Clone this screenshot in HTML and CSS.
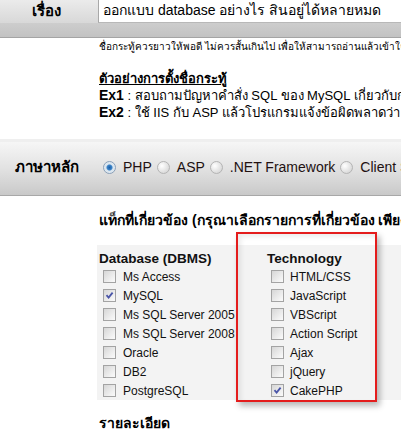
FILE: index.html
```html
<!DOCTYPE html>
<html>
<head>
<meta charset="utf-8">
<link rel="stylesheet" href="styles.css">
</head>
<body>
<div class="topbar">
  <div class="toprow">
    <div class="toplabel">เรื่อง</div>
    <div class="titlebox">ออกแบบ database อย่างไร สินอยู่ได้หลายหมด</div>
  </div>
</div>
<div class="intro">
  <p class="help">ชื่อกระทู้ควรยาวให้พอดี ไม่ควรสั้นเกินไป เพื่อให้สามารถอ่านแล้วเข้าใจได้ทันที</p>
  <div class="examples">
    <div class="ex-title">ตัวอย่างการตั้งชื่อกระทู้</div>
    <div class="ex"><b>Ex1</b> : สอบถามปัญหาคำสั่ง SQL ของ MySQL เกี่ยวกับการ JOIN ตาราง</div>
    <div class="ex"><b>Ex2</b> : ใช้ IIS กับ ASP แล้วโปรแกรมแจ้งข้อผิดพลาดว่า Error</div>
  </div>
</div>
<div class="langbar">
  <div class="langlabel">ภาษาหลัก</div>
  <div class="radios">
    <span class="opt"><span class="radio on"></span>PHP</span>
    <span class="opt"><span class="radio"></span>ASP</span>
    <span class="opt"><span class="radio"></span>.NET Framework</span>
    <span class="opt"><span class="radio"></span>Client Script</span>
  </div>
</div>
<div class="tags">
  <h3 class="tags-title">แท็กที่เกี่ยวข้อง (กรุณาเลือกรายการที่เกี่ยวข้อง เพียง 1-3 รายการ)</h3>
  <div class="tagbox">
    <div class="col col-db">
      <div class="col-title">Database (DBMS)</div>
      <div class="cb"><span class="box"></span>Ms Access</div>
      <div class="cb"><span class="box on"><svg viewBox="0 0 13 13" width="13" height="13"><path d="M3.5 6.2 L5.6 8.6 L9.6 3.6" fill="none" stroke="#4a55a8" stroke-width="1.8"/></svg></span>MySQL</div>
      <div class="cb"><span class="box"></span>Ms SQL Server 2005</div>
      <div class="cb"><span class="box"></span>Ms SQL Server 2008</div>
      <div class="cb"><span class="box"></span>Oracle</div>
      <div class="cb"><span class="box"></span>DB2</div>
      <div class="cb"><span class="box"></span>PostgreSQL</div>
    </div>
    <div class="col col-tech">
      <div class="col-title">Technology</div>
      <div class="cb"><span class="box"></span>HTML/CSS</div>
      <div class="cb"><span class="box"></span>JavaScript</div>
      <div class="cb"><span class="box"></span>VBScript</div>
      <div class="cb"><span class="box"></span>Action Script</div>
      <div class="cb"><span class="box"></span>Ajax</div>
      <div class="cb"><span class="box"></span>jQuery</div>
      <div class="cb"><span class="box on"><svg viewBox="0 0 13 13" width="13" height="13"><path d="M3.5 6.2 L5.6 8.6 L9.6 3.6" fill="none" stroke="#4a55a8" stroke-width="1.8"/></svg></span>CakePHP</div>
    </div>
  </div>
  <h3 class="detail-title">รายละเอียด</h3>
</div>
<div class="callout"></div>
</body>
</html>
```
FILE: styles.css
```css
html, body {
  margin: 0;
  padding: 0;
  overflow: hidden;
  background: #fff;
}
body {
  position: relative;
  width: 401px;
  height: 430px;
  font-family: Tahoma, "Liberation Sans", "Noto Sans", sans-serif;
  color: #000;
}
.topbar {
  height: 37px;
  border-bottom: 1px solid #a4a4a4;
  background: linear-gradient(#ebebeb 0px, #d8d8d8 23px, #cdcdcd 23px, #c2c2c2 37px);
}
.toprow {
  display: flex;
  height: 23px;
}
.toplabel {
  width: 98px;
  flex: none;
  box-sizing: border-box;
  padding-left: 32px;
  font-weight: bold;
  font-size: 15px;
  line-height: 22px;
}
.titlebox {
  flex: 1;
  background: #fff;
  border-left: 1px solid #a8a8a8;
  border-bottom: 1px solid #b8b8b8;
  box-sizing: border-box;
  padding-left: 4px;
  font-size: 14px;
  line-height: 21px;
  white-space: nowrap;
  overflow: hidden;
}
.intro {
  padding-left: 99px;
  white-space: nowrap;
  overflow: hidden;
}
.help {
  margin: 2px 0 0;
  font-size: 10px;
  line-height: 14px;
}
.examples {
  margin-top: 17px;
  font-size: 13px;
  line-height: 16px;
}
.ex-title {
  font-weight: bold;
  text-decoration: underline;
}
.ex b {
  font-family: "Liberation Sans", sans-serif;
  font-size: 14px;
}
.langbar {
  margin-top: 18px;
  height: 53px;
  border-top: 3px solid #efefef;
  border-bottom: 1px solid #a8a8a8;
  background: linear-gradient(#f6f6f6, #e2e2e2 50%, #c9c9c9);
  display: flex;
  align-items: center;
  white-space: nowrap;
  overflow: hidden;
}
.langlabel {
  width: 103px;
  flex: none;
  box-sizing: border-box;
  padding-left: 15px;
  font-weight: bold;
  font-size: 15px;
  margin-top: -3px;
}
.radios {
  display: flex;
  align-items: center;
  margin-top: -3px;
  font-family: "Liberation Sans", sans-serif;
  font-size: 14px;
  color: #221111;
}
.opt {
  display: inline-flex;
  align-items: center;
  margin-right: 5px;
}
.radio {
  width: 11px;
  height: 11px;
  border-radius: 50%;
  border: 1px solid #b4b4b4;
  background: radial-gradient(circle at 35% 35%, #ffffff, #dcdcdc 70%, #c8c8c8);
  margin-right: 7px;
}
.radio.on {
  border-color: #8aa0b8;
  background: radial-gradient(circle, #1a5fa8 0, #3c84c8 2.5px, #d8e4ee 3.5px, #e8eef4 100%);
}
.tags {
  padding-left: 97px;
}
.tags-title {
  margin: 14px 0 0 2px;
  font-size: 14px;
  line-height: 20px;
  font-weight: bold;
  white-space: nowrap;
  overflow: hidden;
}
.tagbox {
  margin-top: 15px;
  background: #f3f3f3;
  display: flex;
  padding-top: 5px;
  height: 150px;
}
.col-db {
  width: 168px;
  padding-left: 2px;
}
.col-title {
  font-family: "Liberation Sans", sans-serif;
  font-weight: bold;
  font-size: 13.5px;
  line-height: 17px;
  color: #111;
}
.cb {
  display: flex;
  align-items: center;
  height: 19px;
  padding-left: 4px;
  font-family: "Liberation Sans", sans-serif;
  font-size: 12px;
  color: #111;
  white-space: nowrap;
}
.box {
  width: 11px;
  height: 11px;
  border: 1px solid #a3a3a3;
  background: linear-gradient(135deg, #d6d6d6, #f4f4f4 80%, #fafafa);
  margin-right: 7px;
  position: relative;
  flex: none;
}
.col-tech .box {
  margin-right: 6px;
}
.box svg {
  position: absolute;
  left: -1px;
  top: -1px;
}
.detail-title {
  margin: 13px 0 0 2px;
  font-size: 14px;
  line-height: 20px;
  font-weight: bold;
}
.callout {
  position: absolute;
  left: 236px;
  top: 232px;
  width: 137px;
  height: 166px;
  border: 2px solid #e41c1c;
  box-shadow: 3px 4px 6px rgba(0,0,0,0.28), inset 3px 3px 5px rgba(0,0,0,0.08);
}
```
